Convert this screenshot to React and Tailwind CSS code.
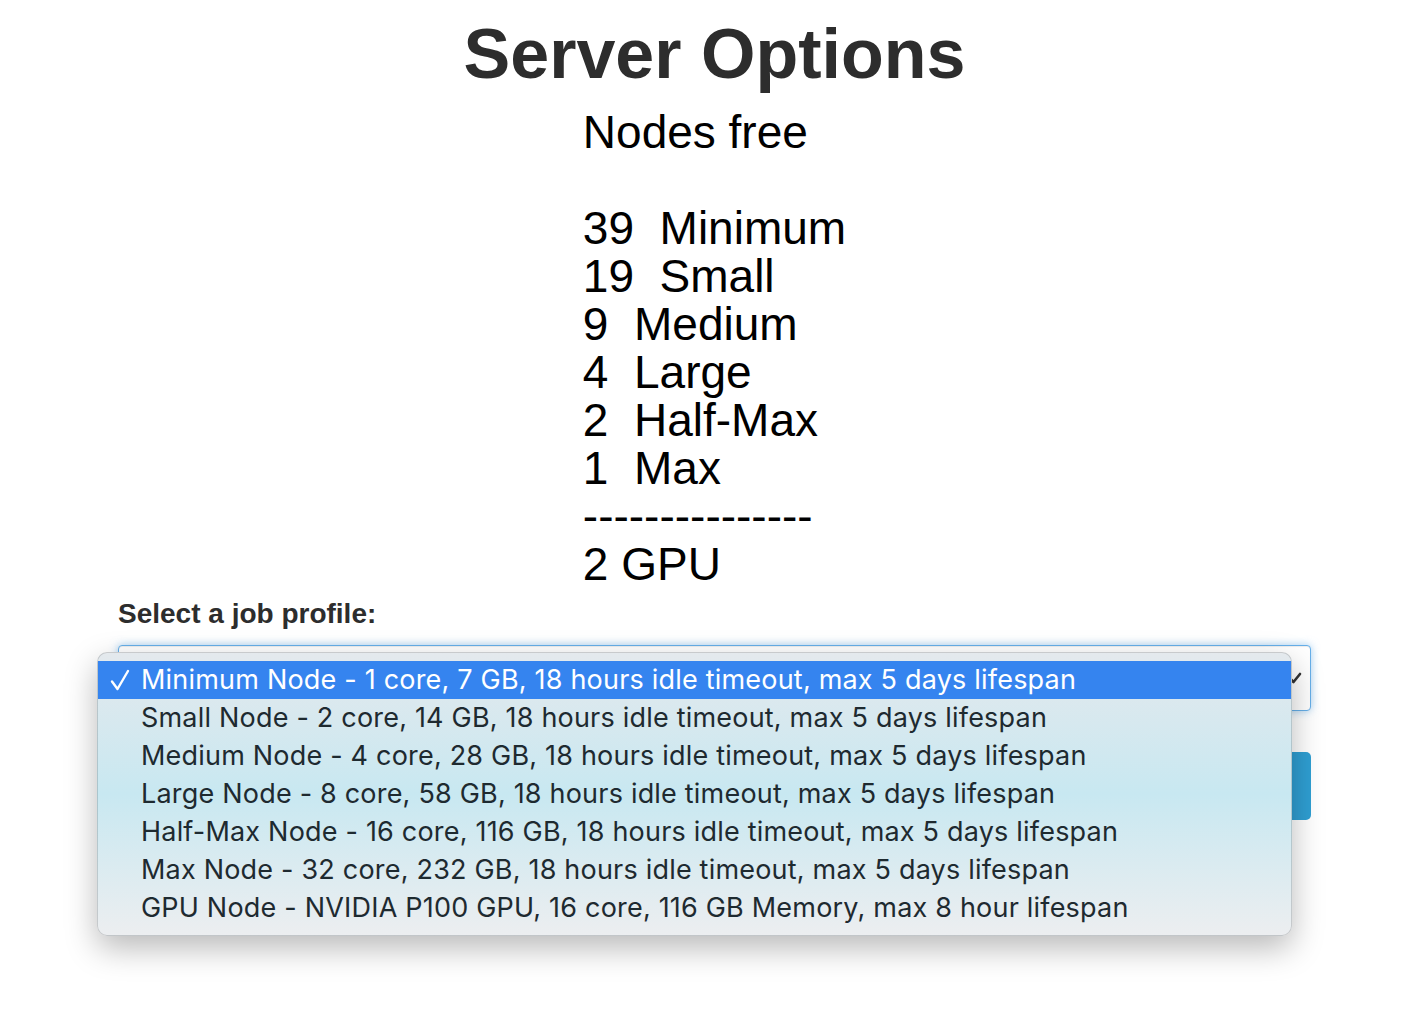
import React from 'react';

const nodeLines = [
    'Nodes free',
    '',
    '39  Minimum',
    '19  Small',
    '9  Medium',
    '4  Large',
    '2  Half-Max',
    '1  Max',
    '---------------',
    '2 GPU',
];

const profiles = [
    'Minimum Node - 1 core, 7 GB, 18 hours idle timeout, max 5 days lifespan',
    'Small Node - 2 core, 14 GB, 18 hours idle timeout, max 5 days lifespan',
    'Medium Node - 4 core, 28 GB, 18 hours idle timeout, max 5 days lifespan',
    'Large Node - 8 core, 58 GB, 18 hours idle timeout, max 5 days lifespan',
    'Half-Max Node - 16 core, 116 GB, 18 hours idle timeout, max 5 days lifespan',
    'Max Node - 32 core, 232 GB, 18 hours idle timeout, max 5 days lifespan',
    'GPU Node - NVIDIA P100 GPU, 16 core, 116 GB Memory, max 8 hour lifespan',
];

// arrow of the native select, mostly covered by the open menu
const SelectArrow = () => (
    <svg className="absolute right-[7px] top-[24px] h-[16px] w-[16px]" viewBox="0 0 16 16" fill="none">
        <path d="M3 8.5l3.5 3.5L13 4" stroke="#333" strokeWidth={2.6} strokeLinecap="round" strokeLinejoin="round" />
    </svg>
);

const CheckIcon = () => (
    <svg className="h-[22px] w-[20px]" viewBox="0 0 20 22" fill="none">
        <path d="M2 12.5l5.5 7.5L18 2" stroke="currentColor" strokeWidth={2.4} strokeLinecap="round" strokeLinejoin="round" />
    </svg>
);

const ProfileMenu = () => (
    <div className="absolute left-[-21px] top-[7px] z-10 w-[1195px] rounded-[10px] border border-black/15 bg-gradient-to-b from-[#e4e9ed] via-[#c8e8f1] to-[#eceef0] py-[8px] shadow-[0_12px_32px_rgba(0,0,0,0.28)] font-['Inter','Noto_Sans',sans-serif] text-[27px] tracking-[0.2px] text-[#1e2a30]">
        {profiles.map((p, i) => (
            <div
                key={p}
                className={`flex h-[38px] items-center ${i === 0 ? 'bg-[#3584ef] text-white' : ''}`}
            >
                <span className="flex w-[43px] pl-[12px]">{i === 0 && <CheckIcon />}</span>
                <span className="whitespace-pre">{p}</span>
            </div>
        ))}
    </div>
);

export default function App() {
    return (
        <div className="min-h-screen bg-white font-['Liberation_Sans','Helvetica',sans-serif]">
            <div className="ml-[118px] w-[1193px]">
                <h1 className="mt-[14px] text-center text-[70px] font-bold leading-[80px] text-[#2d2d2d]">
                    Server Options
                </h1>

                <div className="mt-[14px] text-center">
                    <pre className="inline-block text-left font-['Liberation_Sans','Helvetica',sans-serif] text-[46px] leading-[48px] text-black">
                        {nodeLines.join('\n')}
                    </pre>
                </div>

                <form>
                    <label className="mt-[10px] block text-[28px] font-bold leading-[32px] text-[#2d2d2d]">
                        Select a job profile:
                    </label>
                    <div className="relative mt-[15px]">
                        <div className="relative h-[66px] rounded-[4px] border border-[#66afe9] bg-white shadow-[inset_0_1px_1px_rgba(0,0,0,0.075),0_0_8px_rgba(102,175,233,0.6)]">
                            <SelectArrow />
                        </div>
                        <ProfileMenu />
                    </div>
                    {/* launch button, covered by the open menu */}
                    <button
                        type="button"
                        aria-label="Launch Server"
                        className="mt-[41px] block h-[68px] w-full rounded-[5px] bg-[#2f9fd3]"
                    />
                </form>
            </div>
        </div>
    );
}
